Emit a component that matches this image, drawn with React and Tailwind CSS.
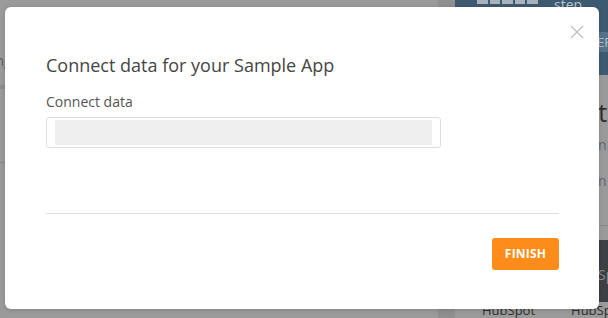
export default function App() {
  return (
    <div className="relative w-[608px] h-[318px] overflow-hidden bg-[#9a9a9a] font-['Open_Sans',sans-serif]">
      {/* dimmed page underneath */}
      <div className="flex h-full">
        <div className="w-[438px] shrink-0 flex flex-col">
          <div className="h-[85px] pt-[52px] text-[14px] leading-[18px] text-[#555a66] -ml-[8px]">ing</div>
          <div className="h-[4px] bg-[#8c8c8c]" />
          <div className="h-[73px]" />
          <div className="h-px bg-[#8a8a8a]" />
        </div>
        <div className="w-[17px] shrink-0 bg-[#8f8f8f]" />
        <div className="flex-1 min-w-0 overflow-hidden flex flex-col">
          <div className="h-[75px] bg-[#3e5a70] relative">
            <div className="flex gap-[2px] ml-[22px] w-[61px] h-[4px]">
              <div className="flex-1 bg-[#a9b3bb]" />
              <div className="flex-1 bg-[#a9b3bb]" />
              <div className="flex-1 bg-[#a9b3bb]" />
              <div className="flex-1 bg-[#a9b3bb]" />
              <div className="flex-1 bg-[#a9b3bb]" />
            </div>
            <div className="absolute left-[99px] -top-[6px] text-[14px] text-[#b9c4cc]">step.</div>
            <div className="absolute left-[120px] top-[32px] w-[60px] h-[20px] bg-[#56718a] text-[13px] leading-[20px] text-[#b0bcc6] pl-[22px]">ER</div>
          </div>
          <div className="flex-1 flex flex-col pl-[143px] text-[#4a4a4a]">
            <div className="text-[26px] leading-[30px] mt-[22px] text-[#2e2e2e]">t</div>
            <div className="text-[14px] leading-[20px] mt-[8px] text-[#666]">n</div>
            <div className="text-[14px] leading-[20px] mt-[16px] text-[#666]">n</div>
          </div>
          <div className="h-px bg-[#8a8a8a] mb-[14px]" />
          <div className="h-[62px] bg-[#3d3f42] pl-[143px] pt-[24px] text-[14px] text-[#8a8d90]">Sp</div>
          <div className="h-[16px] flex gap-[36px] pl-[27px] text-[13px] leading-[16px] text-[#2b2b2b] whitespace-nowrap">
            <span>HubSpot</span>
            <span>HubSpot</span>
          </div>
        </div>
      </div>

      {/* modal */}
      <div className="absolute left-[5px] top-[7px] w-[594px] h-[302px] bg-white rounded-[6px] shadow-[0_1px_4px_rgba(0,0,0,0.15)] pl-[41px] pr-[40px] pt-[46px] flex flex-col">
        <button className="absolute right-[15px] top-[18px] w-[14px] h-[14px] text-[#bdbdbd]">
          <svg viewBox="0 0 14 14" width="14" height="14" fill="none" stroke="currentColor" strokeWidth="1.3">
            <path d="M1 1L13 13M13 1L1 13" />
          </svg>
        </button>
        <h2 className="text-[18px] leading-[24px] text-[#454545] font-normal">Connect data for your Sample App</h2>
        <label className="mt-[15px] text-[14px] leading-[20px] text-[#555]">Connect data</label>
        <div className="mt-[5px] w-[395px] h-[31px] border border-[#dedede] rounded-[3px] px-[8px] py-[2px]">
          <div className="h-full bg-[#efefef]" />
        </div>
        <div className="mt-[65px] h-px bg-[#e0e0e0]" />
        <div className="mt-[24px] flex justify-end">
          <button className="w-[67px] h-[32px] bg-[#fd8c1a] rounded-[3px] text-white text-[12px] font-bold tracking-[0.2px]">
            FINISH
          </button>
        </div>
      </div>
    </div>
  );
}
